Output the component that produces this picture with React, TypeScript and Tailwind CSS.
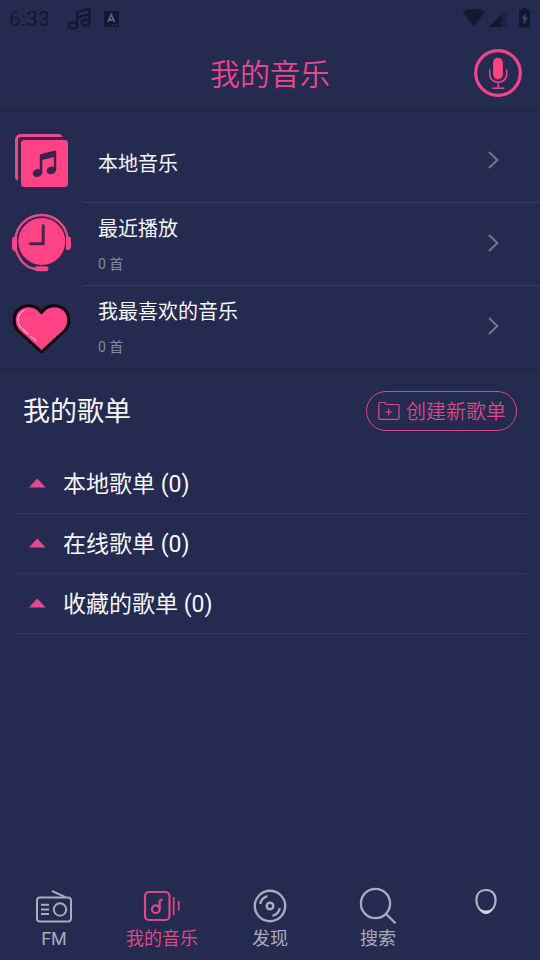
import type { ReactNode } from "react";
import { clsx } from "clsx";

interface IconProps {
  className?: string;
}

interface LibraryItem {
  title: string;
  count?: string;
  icon: ReactNode;
}

interface Tab {
  label: string;
  icon: ReactNode;
  active?: boolean;
}

function IconNotes({ className }: IconProps) {
  return (
    <svg width="26" height="24" viewBox="0 0 26 24" fill="none" stroke="currentColor" strokeWidth="2.2" className={className}>
      <ellipse cx="5.8" cy="18.6" rx="4.3" ry="3" />
      <ellipse cx="18.6" cy="15.8" rx="4" ry="2.9" />
      <path d="M10.1 18.5V5L22.6 1.8v14M10.1 10.4 22.6 7.3" strokeLinejoin="round" />
    </svg>
  );
}

function StatusBar() {
  return (
    <div className="flex h-[37px] shrink-0 items-center pl-[9px] pr-[10px] text-[#14172f]">
      <span className="w-[58px] pt-px font-['Roboto',sans-serif] text-[20.5px] leading-none tracking-[0.4px]">6:33</span>
      <IconNotes />
      <svg width="15" height="16" viewBox="0 0 15 16" className="ml-[11px]">
        <rect width="15" height="16" rx="1.5" fill="currentColor" />
        <path d="m4 11.2 3.3-7.6 3.3 7.6M5.2 8.8h4.2" fill="none" stroke="#5a5f83" strokeWidth="1.7" />
        <path d="M8 14h1M10 14h1M12 14h1" stroke="#474c70" />
      </svg>
      <svg width="68" height="20" viewBox="0 0 68 20" className="ml-auto -mt-px">
        <path d="M0.5 4C6-.5 17.5-.5 23 4L11.7 18.5z" fill="currentColor" />
        <path d="M45 1v18H27z" fill="#1e2243" />
        <path d="M39.5 6.500V19H27z" fill="currentColor" />
        <path d="M60 0h5v2h3v17.500H57V2h3z" fill="currentColor" />
        <path d="m64 4.500-4.300 6.500h2.300l-.5 5.500 4.500-7h-2.500z" fill="#41466b" />
      </svg>
    </div>
  );
}

function IconMic() {
  return (
    <svg width="48" height="48" viewBox="0 0 48 48" fill="none">
      <circle cx="24" cy="24" r="22.3" stroke="#f04586" strokeWidth="3.2" />
      <rect x="19.1" y="8.8" width="9.8" height="21.7" rx="4.9" fill="#ff4385" />
      <path d="M15.700 20.500v4.500c0 11 17 11 17 0v-4.500M24.200 33v6M18.200 39.200h12" stroke="#e34a84" strokeWidth="1.5" />
    </svg>
  );
}

function IconAlbum() {
  return (
    <svg width="60" height="60" viewBox="0 0 60 60">
      <path d="M3 45V8.500Q3 2 9 2h37.500Q49.500 2 50.500 5H9Q6 5 6 8v40.500Q3 48 3 45Z" fill="#e24c88" />
      <rect x="6" y="5" width="46" height="46" rx="4" fill="#4a1f50" />
      <rect x="9" y="8" width="47" height="47" rx="3.5" fill="#ff4385" />
      <path d="M6 51V48h3v3z" fill="#252a50" />
      <g fill="#3b2050">
        <ellipse cx="25.5" cy="41" rx="4.8" ry="3.9" transform="rotate(-12 25.5 41)" />
        <ellipse cx="39.3" cy="38.4" rx="4.7" ry="3.8" transform="rotate(-12 39.3 38.4)" />
        <path d="M27.800 41V23.500q0-1 1-1.300l14-3.700q1.400-.3 1.400 1V38.400h-2.300V25L30.300 28v13z" />
      </g>
    </svg>
  );
}

function IconHistory() {
  return (
    <svg width="60" height="60" viewBox="0 0 60 60" fill="none">
      <circle cx="29.5" cy="28.3" r="26" fill="#3b2050" />
      <path d="M3.300 26a26.300 26.300 0 0 1 52.400 0" stroke="#e24c88" strokeWidth="2.4" />
      <path d="M3.800 36C7 48 15 55.500 25 56.200" stroke="#e24c88" strokeWidth="2.4" />
      <circle cx="29.8" cy="28.5" r="23.5" fill="#ff4385" />
      <path d="M5 23.500H3.300A3.300 3.300 0 0 0 0 27v7.500A3.500 3.500 0 0 0 5 38z" fill="#ee4887" />
      <path d="M54 23.500h1.800a3 3 0 0 1 3.200 3v7a3.500 3.500 0 0 1-3.500 3.500H54z" fill="#ee4887" />
      <rect x="22.5" y="53.3" width="14" height="5" rx="2.5" fill="#ee4887" />
      <path d="M31.200 12.800v18H18.300" stroke="#46204f" strokeWidth="3" strokeLinecap="round" />
    </svg>
  );
}

function IconHeart() {
  return (
    <svg width="60" height="52" viewBox="0 0 60 52" fill="none">
      <path
        d="M29.500 49 5.500 27C-.5 18.500 2 7.500 10.500 4 18 1.500 25 3.500 29.500 9.500 34 3.500 41 1.500 48.500 4 57 7.500 59.500 18.500 53.500 27Z"
        fill="#ff4385"
        stroke="#12060f"
        strokeWidth="3"
        strokeLinejoin="round"
      />
      <path d="M12 7.500C5 11 4.500 19 9 24.500l7 6.500" stroke="#ffb0cc" strokeWidth="1.2" strokeLinecap="round" />
      <path d="m19 33.500 1.500 1.500M22 35.500l2 2.200" stroke="#ffb0cc" strokeWidth="1.2" strokeLinecap="round" />
    </svg>
  );
}

function IconChevron() {
  return (
    <svg width="12" height="20" viewBox="0 0 12 20" fill="none" className="-mt-[2px]">
      <path d="m1 2 8.300 8L1 18" stroke="#6f728b" strokeWidth="2.2" />
    </svg>
  );
}

function IconRadio() {
  return (
    <svg width="38" height="38" viewBox="0 0 38 38" fill="none" stroke="currentColor" strokeWidth="2">
      <rect x="2" y="10.5" width="34" height="24" rx="3" />
      <path d="M17 4 30.500 10.200M6 17.700h8M6 22.400h8M6 27.100h8" />
      <circle cx="25" cy="22.5" r="6.2" />
    </svg>
  );
}

function IconMyMusic() {
  return (
    <svg width="38" height="38" viewBox="0 0 38 38" fill="none" stroke="currentColor" strokeWidth="2.2">
      <rect x="2" y="5" width="24.5" height="28" rx="4" />
      <circle cx="12.8" cy="22.2" r="3.8" />
      <path d="M16.600 22.200V14.500q.3-2 3.200-1.900" />
      <path d="M30.700 10v18M35.700 14v9.500" strokeWidth="1.7" />
    </svg>
  );
}

function IconDisc() {
  return (
    <svg width="38" height="38" viewBox="0 0 38 38" fill="none" stroke="currentColor" strokeWidth="2.4">
      <circle cx="19" cy="19" r="15.2" />
      <circle cx="19" cy="19" r="3.3" strokeWidth="2.5" />
      <path d="M9.200 17a10 10 0 0 1 7.300-7.800M28.800 21a10 10 0 0 1-7.300 7.800" />
    </svg>
  );
}

function IconSearch() {
  return (
    <svg width="38" height="38" viewBox="0 0 38 38" fill="none" stroke="currentColor" strokeWidth="2.3">
      <circle cx="16.5" cy="16.5" r="14.6" />
      <path d="m26.800 26.800 9.700 9.500" />
    </svg>
  );
}

function IconProfile() {
  return (
    <svg width="38" height="38" viewBox="0 0 38 38" fill="none">
      <path d="M19 3c6 0 9.600 4 9.600 10.300 0 7-5.200 12.500-9.600 12.500S9.400 20.300 9.400 13.300C9.400 7 13 3 19 3Z" stroke="#b2b3c1" strokeWidth="2.1" />
      <path d="M12 21.500q7 4 14 0-3 5.500-7 5.500t-7-5.500" fill="#d0d1dc" />
    </svg>
  );
}

const library: LibraryItem[] = [
  { title: "本地音乐", icon: <IconAlbum /> },
  { title: "最近播放", count: "0 首", icon: <IconHistory /> },
  { title: "我最喜欢的音乐", count: "0 首", icon: <IconHeart /> },
];

const playlists = ["本地歌单 (0)", "在线歌单 (0)", "收藏的歌单 (0)"];

const tabs: Tab[] = [
  { label: "FM", icon: <IconRadio /> },
  { label: "我的音乐", icon: <IconMyMusic />, active: true },
  { label: "发现", icon: <IconDisc /> },
  { label: "搜索", icon: <IconSearch /> },
  { label: "", icon: <IconProfile /> },
];

function LibraryRow({ item, last }: { item: LibraryItem; last: boolean }) {
  return (
    <div className={clsx("flex", last ? "h-[82px]" : "h-[83px]")}>
      <div className={clsx("flex w-[83px] shrink-0 items-center pl-[12px]", item.count && !last && "pb-[3px]", last && "pt-[3px]")}>
        {item.icon}
      </div>
      <div className={clsx("flex flex-1 items-center pl-[15px] pr-[40px]", !last && "border-b border-[#393e60]")}>
        <div className={clsx("flex-1", item.count ? "pt-px" : "pt-[6px]")}>
          <p className="text-[20px] leading-[26px] text-[#f5f6fb]">{item.title}</p>
          {item.count && <p className="mt-[12px] text-[14px] leading-[20px] text-[#85889c]">{item.count}</p>}
        </div>
        <IconChevron />
      </div>
    </div>
  );
}

export default function App() {
  return (
    <div className="flex h-[960px] w-[540px] flex-col overflow-hidden bg-[#252a50] font-['Roboto','Noto_Sans_CJK_SC',sans-serif]">
      <StatusBar />
      <header className="grid h-[75px] shrink-0 grid-cols-[1fr_auto_1fr] items-center border-b border-[#1f2344]">
        <h1 className="col-start-2 pt-[2px] text-[30px] font-[350] leading-[40px] text-[#ec4789]">我的音乐</h1>
        <button className="mb-[2px] mr-[18px] justify-self-end">
          <IconMic />
        </button>
      </header>

      <section className="shrink-0 border-b border-[#1f2344] pt-[8px]">
        {library.map((item, i) => (
          <LibraryRow key={item.title} item={item} last={i === library.length - 1} />
        ))}
      </section>

      <div className="flex h-[84px] shrink-0 items-center justify-between pl-[23px] pr-[23px]">
        <h2 className="pt-px text-[27px] leading-[36px] text-[#f5f6fb]">我的歌单</h2>
        <button className="flex h-[40px] w-[151px] items-center rounded-full border border-[#dc4984] pl-[11px] text-[#dc4984]">
          <svg width="22" height="20" viewBox="0 0 22 20" fill="none" stroke="currentColor" strokeWidth="1.2">
            <path d="M.8 17V3Q.8 1.500 2.300 1.500h4.200L8.500 3.500h11.700q.8 0 .8.800V17q0 1.300-1.300 1.300H2.100Q.8 18.300.8 17Z" />
            <path d="M10.800 7.500v7M7.300 11h7" />
          </svg>
          <span className="ml-[6px] whitespace-nowrap pt-px text-[20px] font-[350] leading-[28px]">创建新歌单</span>
        </button>
      </div>

      <ul className="mx-[14px] mt-px flex-1">
        {playlists.map((name) => (
          <li key={name} className="flex h-[60px] items-center border-b border-[#363b5e] pl-[15px]">
            <svg width="17" height="10" viewBox="0 0 17 10" className="-mt-[2px]">
              <path d="M0 9.500 8.300 0.500 16.500 9.500z" fill="#e5498a" />
            </svg>
            <span className="ml-[17px] pt-[2px] text-[23px] leading-[32px] text-[#f5f6fb]">{name}</span>
          </li>
        ))}
      </ul>

      <nav className="grid h-[85px] shrink-0 grid-cols-5 border-t border-[#23274a] pt-[11px]">
        {tabs.map((tab, i) => (
          <div key={i} className={clsx("flex flex-col items-center", tab.active ? "text-[#dc4984]" : "text-[#a9abba]")}>
            {tab.icon}
            <span className="mt-[2px] text-[18px] leading-[24px]">{tab.label}</span>
          </div>
        ))}
      </nav>
    </div>
  );
}
